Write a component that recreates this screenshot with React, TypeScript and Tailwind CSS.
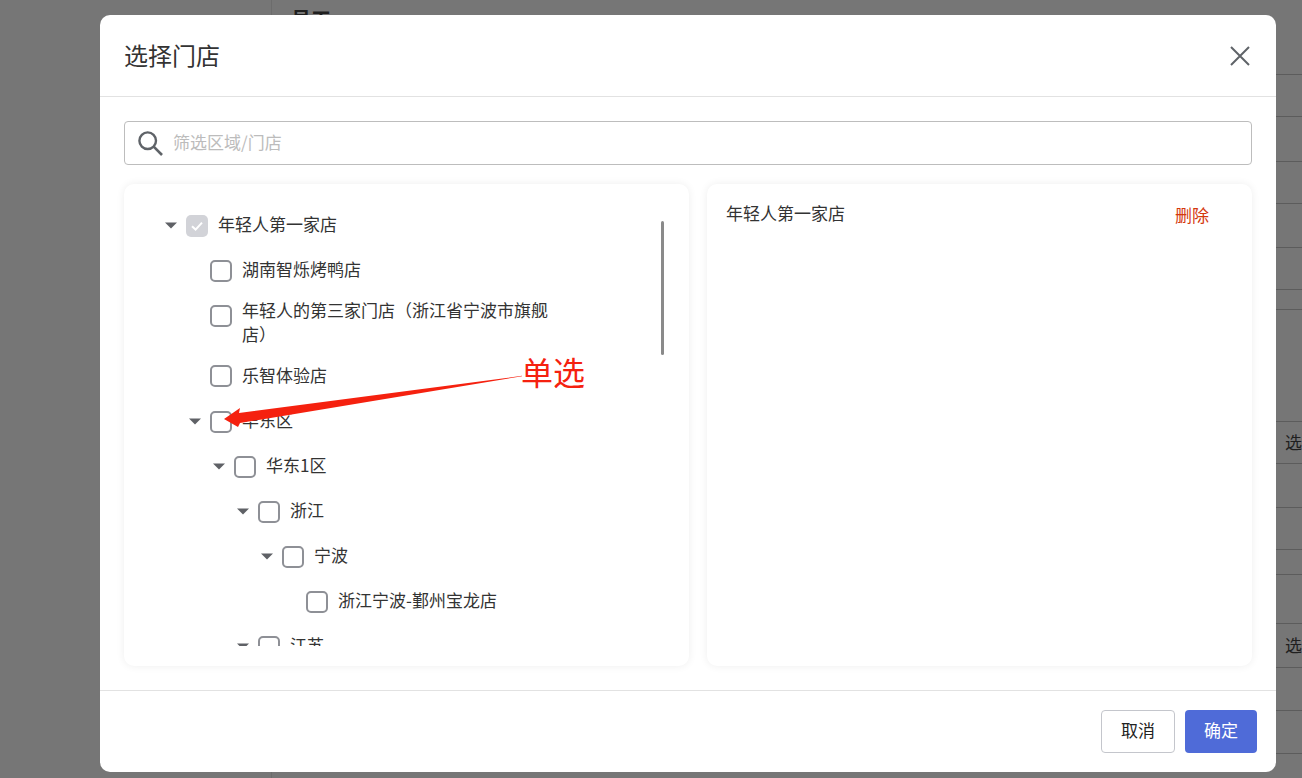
import React from "react";

const font = { fontFamily: '"Noto Sans CJK SC", "Liberation Sans", sans-serif' };

function Caret() {
  return (
    <svg width="12" height="7" viewBox="0 0 12 7" className="shrink-0">
      <path d="M0 0.5H12L6 6.5Z" fill="#5f6166" />
    </svg>
  );
}

function Box({ checked }: { checked?: boolean }) {
  if (checked) {
    return (
      <span className="flex h-[22px] w-[22px] shrink-0 items-center justify-center rounded-[5px] bg-[#d2d3d8]">
        <svg width="16" height="16" viewBox="0 0 16 16" fill="none">
          <path d="M3 8.2L6.6 11.6L13 4.6" stroke="#ffffff" strokeWidth="2" />
        </svg>
      </span>
    );
  }
  return <span className="block h-[22px] w-[22px] shrink-0 rounded-[5px] border-2 border-[#8e9096] bg-white" />;
}

function Row({ pad, caret, checked, label, tall }: { pad: string; caret?: boolean; checked?: boolean; label: string; tall?: boolean }) {
  return (
    <div className={`flex items-center ${tall ? "h-[46px]" : "h-[45px]"} ${pad}`}>
      {caret && (
        <span className="mr-[9px]">
          <Caret />
        </span>
      )}
      <Box checked={checked} />
      <span className="mb-[3px] ml-[10px] text-[17px] leading-6 whitespace-nowrap text-[#333333]">{label}</span>
    </div>
  );
}

const lines = [
  "h-[42px]", "h-[45px]", "h-[42px]", "h-[44px]", "h-[42px]", "h-[20px]", "h-[112px]",
  "h-[42px]", "h-[44px]", "h-[42px]", "h-[25px]", "h-[49px]", "h-[44px]", "h-[43px]", "h-[43px]", "h-[30px]",
];

export default function App() {
  return (
    <div style={font} className="relative h-[778px] w-[1302px] overflow-hidden bg-[#767676]">
      <div className="flex h-full">
        <div className="h-full w-[272px] shrink-0 border-r border-[#6c6c6c]" />
        <div className="min-w-0 flex-1">
          <div className="h-[75px] border-b border-[#5c5c5c] pt-[5px] pl-[19px] text-[20px] leading-7 font-semibold text-[#1f1f1f]">
            员工
          </div>
          {lines.map((h, i) => (
            <div key={i} className={`${h} flex items-center justify-end border-b border-[#5c5c5c]`}>
              {(i === 7 || i === 12) && (
                <span className="mr-[-1px] mb-[2px] w-[18px] text-[17px] leading-6 text-[#1f1f1f]">选</span>
              )}
            </div>
          ))}
        </div>
      </div>

      <div className="absolute top-[15px] left-[100px] flex h-[757px] w-[1176px] flex-col rounded-[10px] bg-white">
        <div className="flex h-[82px] shrink-0 items-center justify-between border-b border-[#e2e2e2] px-[24px]">
          <h2 className="mb-[2px] text-[24px] leading-8 font-normal text-[#333333]">选择门店</h2>
          <svg width="24" height="24" viewBox="0 0 24 24" fill="none">
            <path d="M3 3L21 21M21 3L3 21" stroke="#5f6368" strokeWidth="2" />
          </svg>
        </div>

        <div className="flex flex-1 flex-col px-[24px] pt-[24px]">
          <div className="flex h-[44px] shrink-0 items-center rounded-[4px] border border-[#bdbdbd] pl-[13px]">
            <svg width="26" height="26" viewBox="0 0 26 26" fill="none" className="shrink-0">
              <circle cx="9.7" cy="10.7" r="8.3" stroke="#5f6368" strokeWidth="2.4" />
              <path d="M15.7 16.7L24 25" stroke="#5f6368" strokeWidth="2.6" />
            </svg>
            <span className="mb-[3px] ml-[9px] text-[17px] text-[#bcbcbc]">筛选区域/门店</span>
          </div>

          <div className="mt-[19px] flex h-[482px] gap-[18px]">
            <div className="relative h-full w-[565px] rounded-[10px] bg-white pt-[19px] shadow-[0_0_8px_rgba(0,0,0,0.07)]">
              <div className="h-[443px] overflow-hidden">
                <Row pad="pl-[41px]" caret checked label="年轻人第一家店" />
                <Row pad="pl-[86px]" label="湖南智烁烤鸭店" />
                <div className="flex h-[60px] items-start pt-[12px] pl-[86px]">
                  <Box />
                  <p className="mt-[-7px] ml-[10px] w-[310px] text-[17px] leading-6 text-[#333333]">
                    年轻人的第三家门店（浙江省宁波市旗舰店）
                  </p>
                </div>
                <Row pad="pl-[86px]" tall label="乐智体验店" />
                <Row pad="pl-[65px]" caret label="华东区" />
                <Row pad="pl-[89px]" caret label="华东1区" />
                <Row pad="pl-[113px]" caret label="浙江" />
                <Row pad="pl-[137px]" caret label="宁波" />
                <Row pad="pl-[182px]" label="浙江宁波-鄞州宝龙店" />
                <Row pad="pl-[113px]" caret label="江苏" />
              </div>
              <div className="absolute top-[37px] left-[537px] h-[134px] w-[3px] rounded-full bg-[#8a8a8a]" />
            </div>

            <div className="flex h-full flex-1 items-start justify-between rounded-[10px] bg-white pt-[17px] pr-[43px] pl-[19px] shadow-[0_0_8px_rgba(0,0,0,0.07)]">
              <span className="text-[17px] leading-6 text-[#333333]">年轻人第一家店</span>
              <span className="mt-[2px] text-[17px] leading-6 text-[#d4380d]">删除</span>
            </div>
          </div>
        </div>

        <div className="flex h-[82px] shrink-0 justify-end gap-[10px] border-t border-[#e2e2e2] pt-[19px] pr-[19px]">
          <button className="h-[43px] w-[74px] rounded-[4px] border border-[#c4c6cc] bg-white pb-[3px] text-[17px] text-[#222222]">
            取消
          </button>
          <button className="h-[43px] w-[72px] rounded-[4px] bg-[#4f6bd8] pb-[3px] text-[17px] text-white">确定</button>
        </div>
      </div>

      <svg width="380" height="70" viewBox="0 0 380 70" className="absolute top-[365px] left-[215px]">
        <path d="M9 54L25 43L24 48L307 10.8L307 11.2L25 58L23 62Z" fill="#f5210f" />
      </svg>
      <span className="absolute top-[347px] left-[521px] text-[32px] leading-[48px] text-[#f5210f]">单选</span>
    </div>
  );
}
